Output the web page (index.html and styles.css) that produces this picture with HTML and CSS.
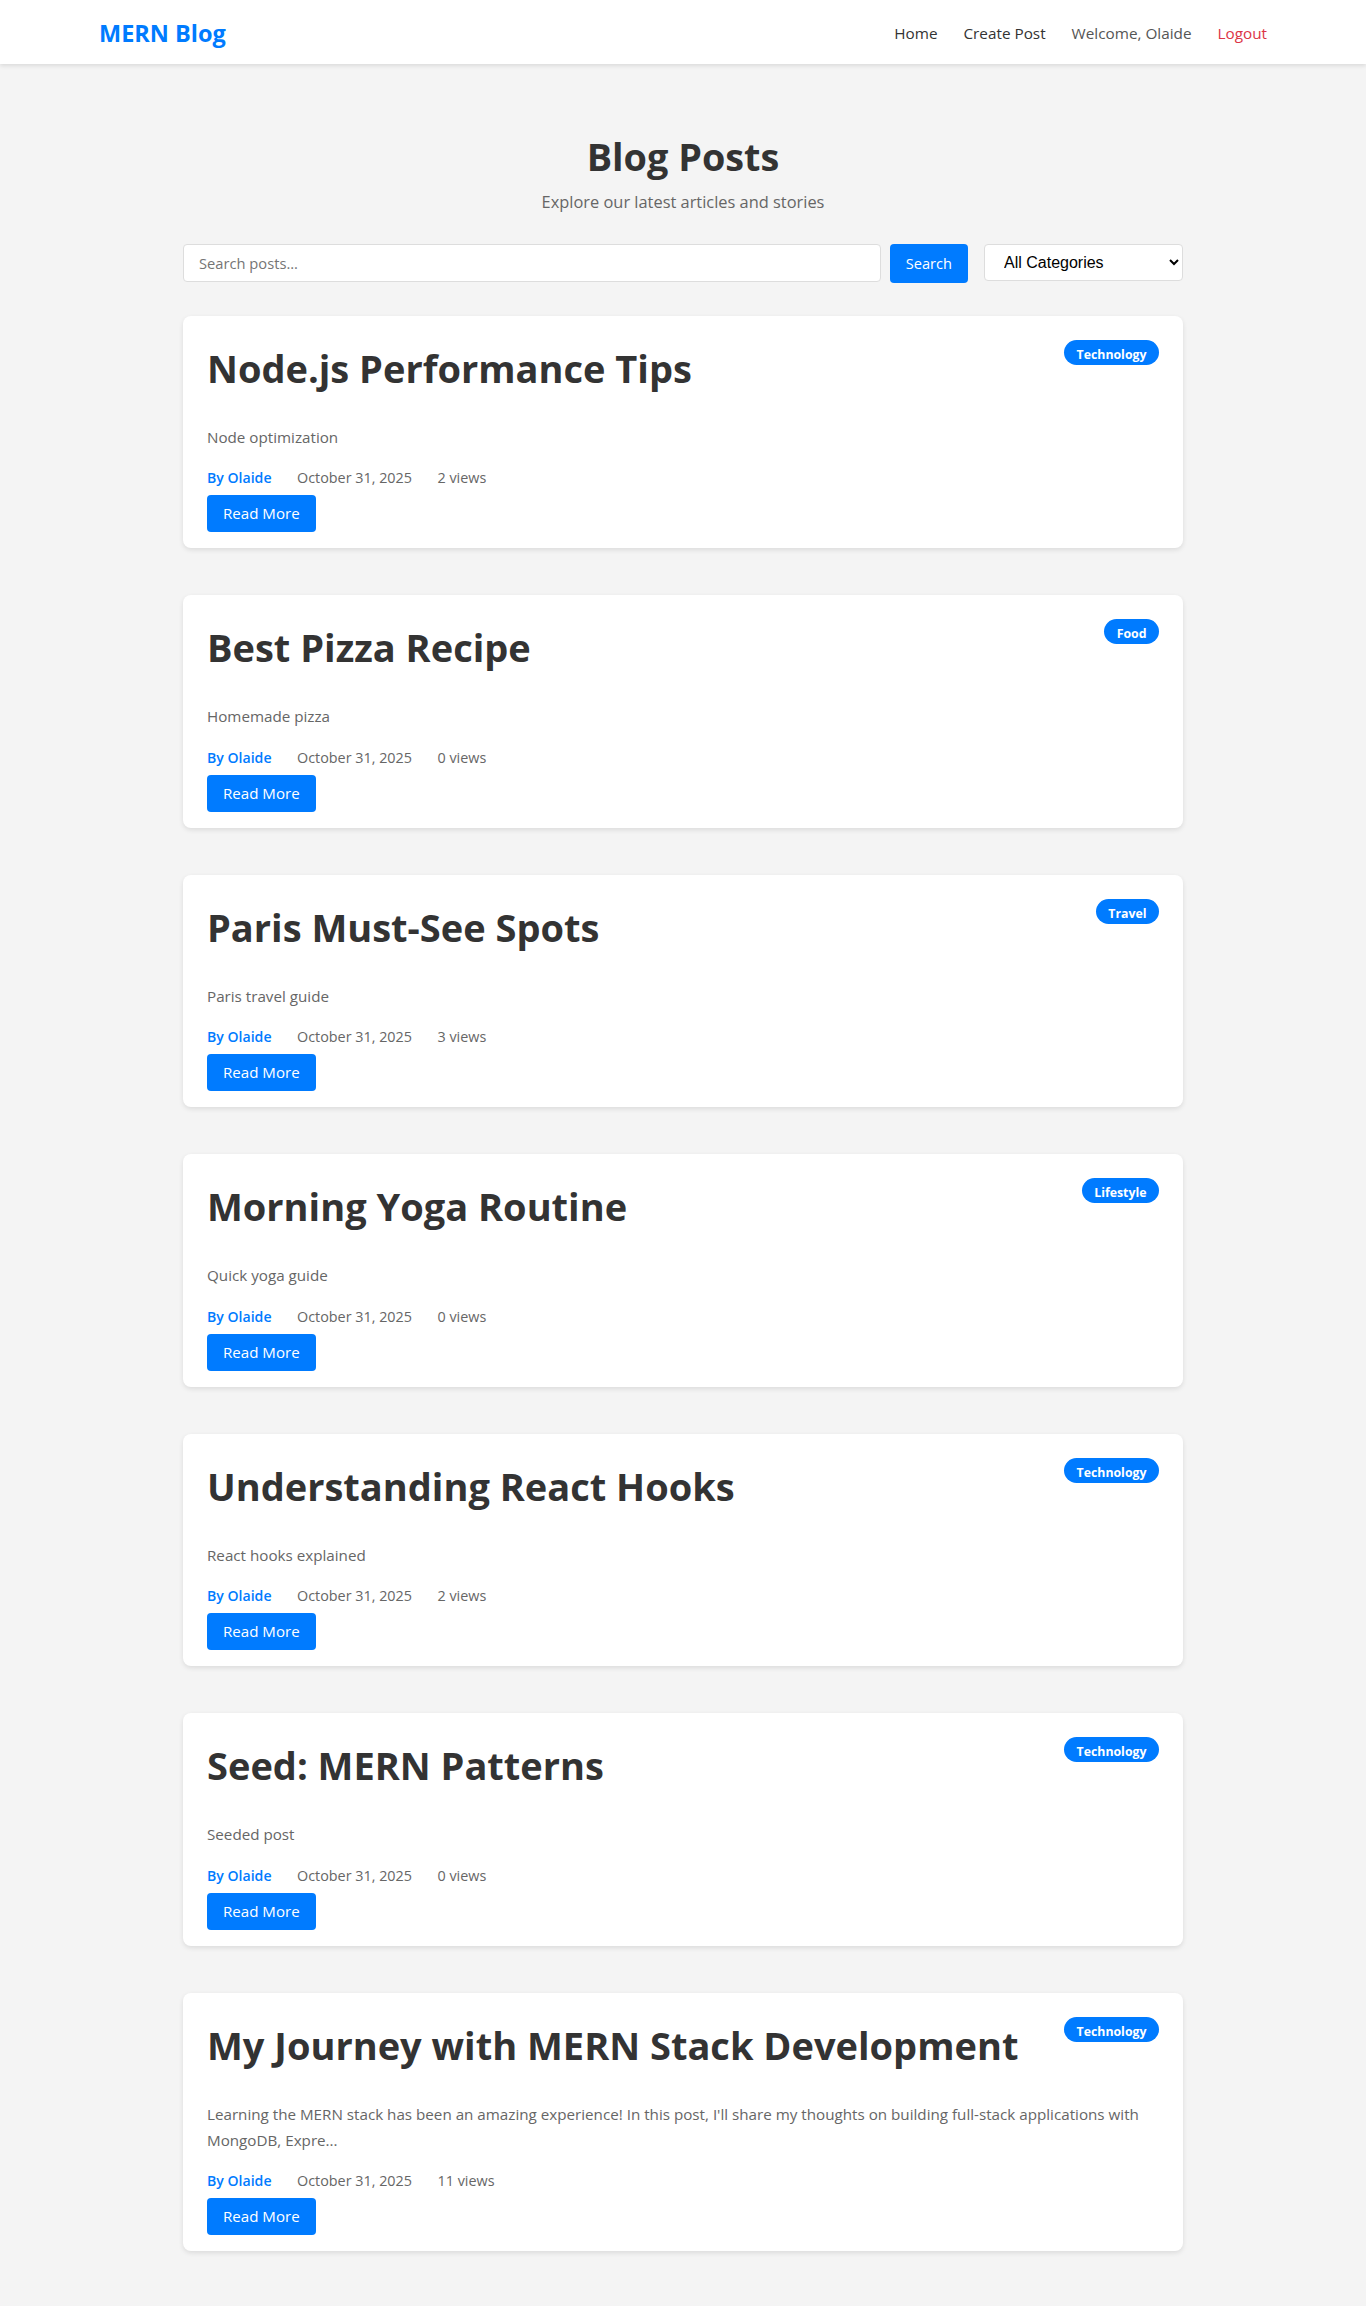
FILE: index.html
```html
<!DOCTYPE html>
<html lang="en">
<head>
<meta charset="utf-8">
<title>MERN Blog</title>
<link rel="stylesheet" href="styles.css">
</head>
<body>
<header class="navbar">
  <div class="nav-inner">
    <a class="logo" href="#">MERN Blog</a>
    <nav class="nav-links">
      <a class="nav-link" href="#">Home</a>
      <a class="nav-link" href="#">Create Post</a>
      <span class="welcome">Welcome, Olaide</span>
      <a class="logout" href="#">Logout</a>
    </nav>
  </div>
</header>

<main class="page">
  <section class="hero">
    <h1 class="hero-title">Blog Posts</h1>
    <p class="hero-sub">Explore our latest articles and stories</p>
  </section>

  <div class="filters">
    <form class="search-form">
      <input class="search-input" type="text" placeholder="Search posts...">
      <button class="search-btn" type="button">Search</button>
    </form>
    <select class="category-select">
      <option>All Categories</option>
    </select>
  </div>

  <div class="post-list">
    <article class="post-card">
      <div class="post-head">
        <h2 class="post-title">Node.js Performance Tips</h2>
        <span class="badge">Technology</span>
      </div>
      <p class="post-excerpt">Node optimization</p>
      <div class="post-meta"><span class="author">By Olaide</span><span>October 31, 2025</span><span>2 views</span></div>
      <a class="read-more" href="#">Read More</a>
    </article>

    <article class="post-card">
      <div class="post-head">
        <h2 class="post-title">Best Pizza Recipe</h2>
        <span class="badge">Food</span>
      </div>
      <p class="post-excerpt">Homemade pizza</p>
      <div class="post-meta"><span class="author">By Olaide</span><span>October 31, 2025</span><span>0 views</span></div>
      <a class="read-more" href="#">Read More</a>
    </article>

    <article class="post-card">
      <div class="post-head">
        <h2 class="post-title">Paris Must-See Spots</h2>
        <span class="badge">Travel</span>
      </div>
      <p class="post-excerpt">Paris travel guide</p>
      <div class="post-meta"><span class="author">By Olaide</span><span>October 31, 2025</span><span>3 views</span></div>
      <a class="read-more" href="#">Read More</a>
    </article>

    <article class="post-card">
      <div class="post-head">
        <h2 class="post-title">Morning Yoga Routine</h2>
        <span class="badge">Lifestyle</span>
      </div>
      <p class="post-excerpt">Quick yoga guide</p>
      <div class="post-meta"><span class="author">By Olaide</span><span>October 31, 2025</span><span>0 views</span></div>
      <a class="read-more" href="#">Read More</a>
    </article>

    <article class="post-card">
      <div class="post-head">
        <h2 class="post-title">Understanding React Hooks</h2>
        <span class="badge">Technology</span>
      </div>
      <p class="post-excerpt">React hooks explained</p>
      <div class="post-meta"><span class="author">By Olaide</span><span>October 31, 2025</span><span>2 views</span></div>
      <a class="read-more" href="#">Read More</a>
    </article>

    <article class="post-card">
      <div class="post-head">
        <h2 class="post-title">Seed: MERN Patterns</h2>
        <span class="badge">Technology</span>
      </div>
      <p class="post-excerpt">Seeded post</p>
      <div class="post-meta"><span class="author">By Olaide</span><span>October 31, 2025</span><span>0 views</span></div>
      <a class="read-more" href="#">Read More</a>
    </article>

    <article class="post-card">
      <div class="post-head">
        <h2 class="post-title">My Journey with MERN Stack Development</h2>
        <span class="badge">Technology</span>
      </div>
      <p class="post-excerpt">Learning the MERN stack has been an amazing experience! In this post, I'll share my thoughts on building full-stack applications with MongoDB, Expre...</p>
      <div class="post-meta"><span class="author">By Olaide</span><span>October 31, 2025</span><span>11 views</span></div>
      <a class="read-more" href="#">Read More</a>
    </article>
  </div>
</main>
</body>
</html>
```
FILE: styles.css
```css
* {
  box-sizing: border-box;
}

html, body {
  margin: 0;
  padding: 0;
}

body {
  background: #f4f4f4;
  color: #333;
  font-family: "Open Sans", "Noto Sans", sans-serif;
  min-height: 2306px;
}

a {
  text-decoration: none;
}

/* ---------- navbar ---------- */
.navbar {
  background: #fff;
  box-shadow: 0 2px 4px rgba(0, 0, 0, 0.1);
  height: 64px;
}

.nav-inner {
  max-width: 1200px;
  margin: 0 auto;
  padding: 2px 16px 0;
  height: 64px;
  display: flex;
  align-items: center;
  justify-content: space-between;
}

.logo {
  color: #007bff;
  font-size: 23.5px;
  font-weight: 700;
  line-height: 32px;
}

.nav-links {
  display: flex;
  align-items: center;
  gap: 26px;
  font-size: 15.3px;
  line-height: 22px;
}

.nav-link {
  color: #333;
  font-weight: 500;
}

.welcome {
  color: #555;
}

.logout {
  color: #dc3545;
}

/* ---------- page ---------- */
.page {
  max-width: 1000px;
  margin: 0 auto;
  padding: 66px 0 48px;
}

.hero {
  text-align: center;
}

.hero-title {
  margin: 0;
  font-size: 37.8px;
  font-weight: 700;
  line-height: 53px;
  color: #333;
}

.hero-sub {
  margin: 6px 0 0;
  font-size: 16.4px;
  line-height: 26px;
  color: #666;
}

/* ---------- filters ---------- */
.filters {
  display: flex;
  align-items: flex-start;
  gap: 16px;
  margin: 29px 0 33px;
}

.search-form {
  flex: 1;
  display: flex;
  gap: 9px;
  margin: 0;
}

.search-input {
  flex: 1;
  height: 38px;
  padding: 0 15px;
  border: 1px solid #ddd;
  border-radius: 4px;
  background: #fff;
  font-family: "Open Sans", sans-serif;
  font-size: 14.7px;
  color: #333;
  outline: none;
}

.search-input::placeholder {
  color: #757575;
}

.search-btn {
  height: 38.5px;
  padding: 0 16px;
  border: none;
  border-radius: 4px;
  background: #007bff;
  color: #fff;
  font-family: "Open Sans", sans-serif;
  font-size: 14.6px;
  cursor: pointer;
}

.category-select {
  width: 199px;
  height: 36.5px;
  padding: 0 10px 0 15px;
  border: 1px solid #ddd;
  border-radius: 4px;
  background: #fff;
  color: #000;
  font-family: "Liberation Sans", Arial, sans-serif;
  font-size: 16px;
}

/* ---------- posts ---------- */
.post-list {
  display: flex;
  flex-direction: column;
  gap: 47px;
}

.post-card {
  background: #fff;
  border-radius: 8px;
  box-shadow: 0 2px 5px rgba(0, 0, 0, 0.1);
  padding: 24px 24px 16px;
}

.post-head {
  display: flex;
  justify-content: space-between;
  align-items: flex-start;
  gap: 16px;
  margin-bottom: 29px;
}

.post-title {
  margin: 0;
  font-size: 38px;
  font-weight: 700;
  line-height: 56px;
  color: #333;
}

.badge {
  flex-shrink: 0;
  background: #007bff;
  color: #fff;
  font-size: 12.33px;
  font-weight: 700;
  line-height: 21px;
  padding: 4px 12.5px 0;
  height: 25px;
  border-radius: 13px;
}

.post-excerpt {
  margin: 0 0 16px;
  font-size: 15.2px;
  line-height: 25.6px;
  color: #666;
}

.post-meta {
  display: flex;
  gap: 25.5px;
  font-size: 14.36px;
  line-height: 23px;
  color: #666;
  margin-bottom: 6px;
}

.author {
  color: #007bff;
  font-weight: 600;
  font-size: 14.1px;
}

.read-more {
  display: inline-block;
  background: #007bff;
  color: #fff;
  font-size: 15.1px;
  line-height: 21px;
  padding: 8px 16px;
  border-radius: 4px;
}
```
